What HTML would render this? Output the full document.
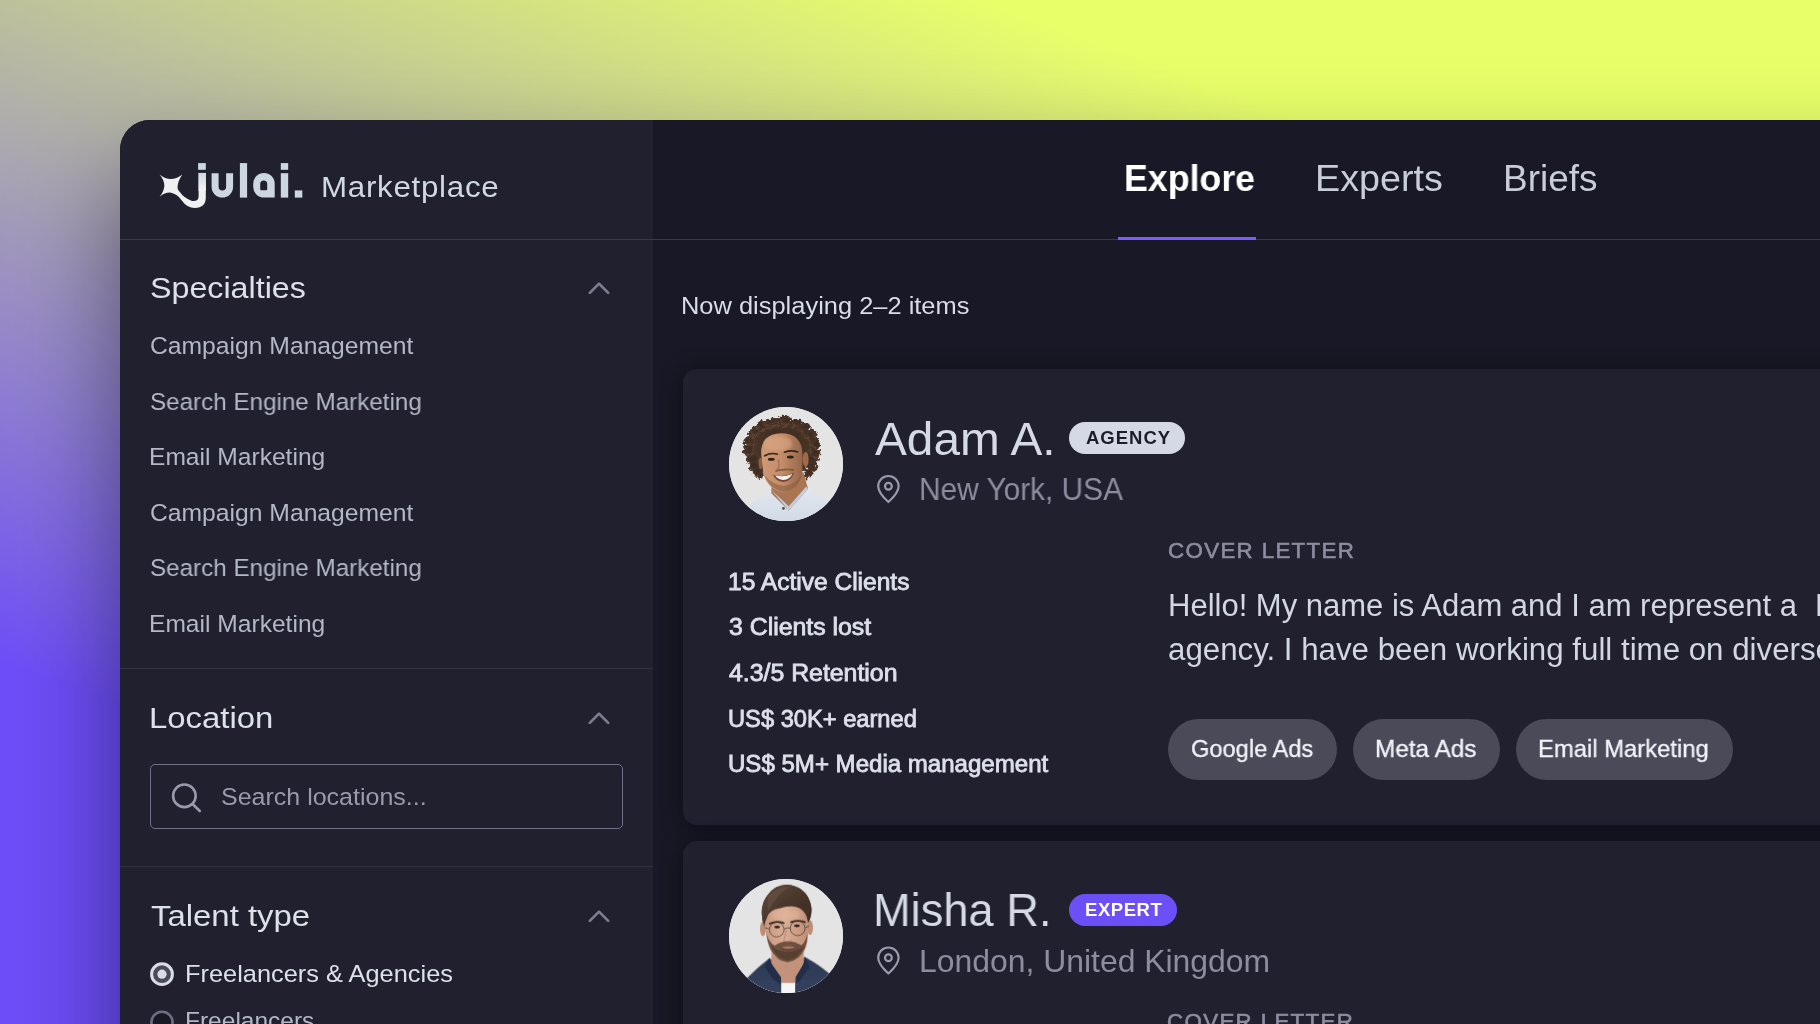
<!DOCTYPE html>
<html lang="en">
<head>
<meta charset="utf-8">
<title>julai. Marketplace</title>
<style>
*{box-sizing:border-box;margin:0;padding:0}
html,body{width:1820px;height:1024px;overflow:hidden}
body{font-family:"Liberation Sans",sans-serif;position:relative;
 background:linear-gradient(20deg,#6e4ef8 21.4%,#e8ff6a 81.9%);}
.abs{position:absolute}
.t{position:absolute;white-space:pre;line-height:1;transform-origin:0 0;will-change:transform}
#panel{position:absolute;left:120px;top:120px;width:1800px;height:1000px;border-radius:30px 0 0 0;
 background:#181826;box-shadow:0 55px 100px rgba(8,8,25,.5);overflow:hidden}
#side{position:absolute;left:0;top:0;width:533px;height:1000px;background:#21202f}
#hline{position:absolute;left:0;top:119px;width:1800px;height:1px;background:#393949}
.sdiv{position:absolute;left:0;width:533px;height:1px;background:#313142}
#uline{position:absolute;left:998px;top:117px;width:138px;height:3px;background:#7a5cff}
.card{position:absolute;left:563px;width:1300px;border-radius:14px;background:#21202f;box-shadow:0 2px 22px rgba(5,5,12,.45)}
.chip{position:absolute;top:599.2px;height:60.8px;border-radius:31px;background:#4b4a58}
.badge{position:absolute;height:32px;border-radius:16px}
#search{position:absolute;left:30.2px;top:644.4px;width:472.6px;height:65px;border:1.6px solid #70708a;border-radius:5px}
.av{position:absolute;width:114px;height:114px;border-radius:50%;overflow:hidden;background:#e4e4e4}
svg{position:absolute;overflow:visible}
</style>
</head>
<body>
<div id="panel">
  <div id="side"></div>
  <div id="hline"></div>
  <div id="uline"></div>
  <div class="sdiv" style="top:548px"></div>
  <div class="sdiv" style="top:746px"></div>
  <div id="search"></div>
  <div class="card" style="top:249.4px;height:456px"></div>
  <div class="card" style="top:720.8px;height:400px"></div>
  <div class="chip" style="left:1047.7px;width:169.3px"></div>
  <div class="chip" style="left:1232.6px;width:147.6px"></div>
  <div class="chip" style="left:1395.6px;width:217.2px"></div>
  <div class="badge" style="left:949px;top:302px;width:116px;background:#d5d9e5"></div>
  <div class="badge" style="left:949px;top:774px;width:108px;background:#6c4ff6"></div>
  <div class="av" style="left:609px;top:287px"><svg width="114" height="114" viewBox="68 55 900 900" style="left:0;top:0">
<defs>
<filter id="fz" x="-10%" y="-10%" width="120%" height="120%"><feTurbulence type="fractalNoise" baseFrequency="0.045" numOctaves="2" seed="4" result="n"/><feDisplacementMap in="SourceGraphic" in2="n" scale="46" xChannelSelector="R" yChannelSelector="G"/></filter>
<filter id="b1"><feGaussianBlur stdDeviation="5"/></filter>
<filter id="b2"><feGaussianBlur stdDeviation="14"/></filter>
<radialGradient id="h1" cx=".5" cy=".42" r=".62"><stop offset="0" stop-color="#3a2920"/><stop offset=".65" stop-color="#473226"/><stop offset="1" stop-color="#76553f"/></radialGradient>
<linearGradient id="s1" x1="0" y1="0" x2="1" y2="0"><stop offset="0" stop-color="#cf9a76"/><stop offset=".5" stop-color="#c48c68"/><stop offset="1" stop-color="#96664a"/></linearGradient>
<linearGradient id="sh1" x1="0" y1="0" x2="0" y2="1"><stop offset="0" stop-color="#e1e7f0"/><stop offset="1" stop-color="#cfd8e4"/></linearGradient>
</defs>
<rect x="0" y="0" width="1100" height="1100" fill="#e4e4e4"/>
<g filter="url(#b1)">
<g fill="url(#h1)" filter="url(#fz)"><ellipse cx="485" cy="368" rx="258" ry="196"/><circle cx="740" cy="354" r="30"/><circle cx="738" cy="376" r="31"/><circle cx="750" cy="410" r="35"/><circle cx="745" cy="431" r="44"/><circle cx="725" cy="458" r="27"/><circle cx="712" cy="474" r="27"/><circle cx="707" cy="472" r="34"/><circle cx="666" cy="499" r="37"/><circle cx="644" cy="528" r="34"/><circle cx="638" cy="530" r="33"/><circle cx="607" cy="543" r="36"/><circle cx="558" cy="539" r="30"/><circle cx="348" cy="538" r="43"/><circle cx="340" cy="526" r="44"/><circle cx="322" cy="517" r="28"/><circle cx="297" cy="498" r="30"/><circle cx="262" cy="484" r="28"/><circle cx="260" cy="471" r="34"/><circle cx="242" cy="450" r="34"/><circle cx="249" cy="430" r="44"/><circle cx="247" cy="416" r="30"/><circle cx="216" cy="401" r="40"/><circle cx="231" cy="363" r="31"/><circle cx="234" cy="350" r="37"/><circle cx="237" cy="335" r="29"/><circle cx="232" cy="323" r="42"/><circle cx="261" cy="274" r="27"/><circle cx="254" cy="268" r="37"/><circle cx="264" cy="254" r="27"/><circle cx="280" cy="242" r="36"/><circle cx="317" cy="218" r="35"/><circle cx="324" cy="204" r="39"/><circle cx="367" cy="185" r="28"/><circle cx="390" cy="193" r="40"/><circle cx="396" cy="179" r="31"/><circle cx="441" cy="172" r="38"/><circle cx="474" cy="167" r="36"/><circle cx="493" cy="185" r="34"/><circle cx="508" cy="160" r="42"/><circle cx="525" cy="163" r="36"/><circle cx="564" cy="188" r="31"/><circle cx="599" cy="175" r="30"/><circle cx="619" cy="185" r="31"/><circle cx="644" cy="216" r="31"/><circle cx="646" cy="218" r="39"/><circle cx="672" cy="225" r="39"/><circle cx="696" cy="266" r="43"/><circle cx="722" cy="268" r="40"/><circle cx="714" cy="282" r="33"/><circle cx="744" cy="320" r="30"/><circle cx="733" cy="323" r="33"/><circle cx="738" cy="344" r="30"/><circle cx="258" cy="470" r="50"/><circle cx="268" cy="525" r="44"/><circle cx="292" cy="568" r="38"/><circle cx="318" cy="598" r="26"/><circle cx="716" cy="470" r="52"/><circle cx="726" cy="528" r="42"/><circle cx="700" cy="575" r="36"/><circle cx="668" cy="604" r="24"/><circle cx="748" cy="420" r="40"/><circle cx="228" cy="395" r="40"/><circle cx="760" cy="350" r="34"/><circle cx="212" cy="330" r="30"/></g>
<path d="M100 980 Q180 820 405 728 L540 875 L692 692 Q830 770 920 870 L920 1000 L100 1000Z" fill="url(#sh1)"/>
<path d="M405 600 L655 570 L692 700 L540 872 L402 735Z" fill="#a97553"/>
<path d="M398 706 L412 722 L540 872 L692 700 L676 684 L540 838Z" fill="#c3cddb"/>
<ellipse cx="673" cy="468" rx="24" ry="58" fill="#9e6a4a"/>
<ellipse cx="318" cy="500" rx="16" ry="45" fill="#8f5f43"/>
<path d="M322 420 Q320 268 480 262 Q640 262 648 420 L648 560 Q625 716 500 726 Q385 716 340 590Z" fill="url(#s1)"/>
<ellipse cx="455" cy="345" rx="110" ry="60" fill="#dcaa88" opacity=".55" filter="url(#b2)"/>
<path d="M350 596 Q395 712 500 722 Q612 712 644 586 Q600 668 500 678 Q410 668 350 596Z" fill="#7d5640" opacity=".5"/>
<path d="M416 590 Q500 618 582 572 Q562 642 495 648 Q438 642 416 590Z" fill="#7f4236"/>
<path d="M432 596 Q500 612 568 583 Q548 627 496 631 Q452 627 432 596Z" fill="#f7f4ef"/>
<path d="M440 560 Q500 540 575 552" stroke="#6a432e" stroke-width="14" fill="none" stroke-linecap="round" opacity=".65"/>
<path d="M458 470 Q472 530 450 545 Q490 566 532 545" stroke="#93634a" stroke-width="10" fill="none" opacity=".75"/>
<ellipse cx="402" cy="468" rx="27" ry="12" fill="#2e2019"/><ellipse cx="552" cy="450" rx="27" ry="12" fill="#2e2019"/>
<path d="M350 440 Q400 412 450 428" stroke="#35251c" stroke-width="13" fill="none" stroke-linecap="round"/>
<path d="M506 412 Q560 392 610 410" stroke="#35251c" stroke-width="13" fill="none" stroke-linecap="round"/>
<circle cx="498" cy="856" r="11" fill="#4a4a52"/>
</g>
</svg></div>
  <div class="av" style="left:609px;top:759px"><svg width="114" height="114" viewBox="68 68 900 900" style="left:0;top:0">
<defs>
<filter id="c1"><feGaussianBlur stdDeviation="5"/></filter>
<filter id="c2"><feGaussianBlur stdDeviation="16"/></filter>
<linearGradient id="s2" x1="0" y1="0" x2="1" y2="0"><stop offset="0" stop-color="#c8987f"/><stop offset=".45" stop-color="#dbae95"/><stop offset="1" stop-color="#c08f76"/></linearGradient>
<linearGradient id="h2" x1="0" y1="0" x2="1" y2="1"><stop offset="0" stop-color="#5d4839"/><stop offset=".6" stop-color="#453428"/><stop offset="1" stop-color="#3a2c24"/></linearGradient>
<linearGradient id="sh2" x1="0" y1="0" x2="0" y2="1"><stop offset="0" stop-color="#2c3954"/><stop offset="1" stop-color="#34435f"/></linearGradient>
</defs>
<rect x="0" y="0" width="1100" height="1100" fill="#e4e4e4"/>
<g filter="url(#c1)">
<path d="M110 980 Q200 835 388 692 L470 770 L600 770 L666 682 Q810 760 910 860 L910 1000 L110 1000Z" fill="url(#sh2)"/>
<path d="M410 600 L652 600 L662 720 L596 900 L478 900 L398 730Z" fill="#c3927a"/>
<path d="M410 650 Q530 770 655 650 L655 600 L410 600Z" fill="#7f5d4e" opacity=".6"/>
<rect x="480" y="888" width="110" height="100" fill="#f5f5f5"/>
<path d="M388 692 L352 762 L418 862 L480 902 L478 842 L405 738Z" fill="#232f47"/>
<path d="M666 682 L704 760 L642 852 L592 902 L594 842 L656 738Z" fill="#232f47"/>
<path d="M346 445 Q296 290 372 196 Q440 100 560 116 Q694 146 718 290 Q724 362 692 414 L600 300 L420 300Z" fill="#453428"/>
<ellipse cx="336" cy="462" rx="23" ry="58" fill="#bf8d75"/><ellipse cx="708" cy="452" rx="23" ry="58" fill="#bf8d75"/>
<path d="M350 430 Q345 280 520 272 Q690 280 692 430 L688 560 Q660 712 528 722 Q400 712 372 560Z" fill="url(#s2)"/>
<ellipse cx="520" cy="350" rx="120" ry="50" fill="#e4b9a0" opacity=".5" filter="url(#c2)"/>
<path d="M360 490 Q370 560 392 612 Q440 718 530 724 Q625 714 668 612 Q686 560 690 490 Q670 575 640 590 Q590 562 535 558 Q470 562 430 594 Q385 575 360 490Z" fill="#54402f" opacity=".82"/>
<path d="M400 600 Q450 700 530 712 Q610 700 660 600 Q600 640 530 645 Q460 640 400 600Z" fill="#453224" opacity=".55"/>
<path d="M468 602 Q535 586 602 602 Q590 638 535 642 Q482 638 468 602Z" fill="#6a4a3c"/>
<path d="M480 607 Q535 592 594 607 Q535 628 480 607Z" fill="#b67868"/>
<path d="M346 445 Q296 290 372 196 Q440 100 560 116 Q694 146 718 290 Q724 362 692 414 Q694 332 642 296 Q560 268 470 298 Q392 310 372 362 Q352 402 346 445Z" fill="url(#h2)"/>
<path d="M380 200 Q450 120 560 130 Q500 150 450 210 Q410 260 380 320 Q360 260 380 200Z" fill="#6b5444" opacity=".6"/>
<g fill="none" stroke="#5a4c45" stroke-width="7"><circle cx="445" cy="467" r="58"/><circle cx="610" cy="457" r="58"/><path d="M503 462 Q527 448 552 456"/><path d="M387 462 L350 452"/><path d="M668 452 L700 440"/></g>
<ellipse cx="448" cy="447" rx="23" ry="11" fill="#2b231f"/><ellipse cx="604" cy="437" rx="23" ry="11" fill="#2b231f"/>
<path d="M390 420 Q445 396 500 416" stroke="#3b2d27" stroke-width="14" fill="none" stroke-linecap="round"/>
<path d="M558 408 Q612 388 667 408" stroke="#3b2d27" stroke-width="14" fill="none" stroke-linecap="round"/>
<path d="M520 470 Q508 540 498 552 Q530 573 566 552" stroke="#b3856f" stroke-width="9" fill="none" opacity=".8"/>
</g>
</svg></div>
</div>

<!-- icons (page coordinates) -->
<svg width="1820" height="1024" viewBox="0 0 1820 1024" style="left:0;top:0" fill="none">
  <!-- chevrons -->
  <g stroke="#7d7d90" stroke-width="2.7" stroke-linecap="round" stroke-linejoin="round">
    <path d="M589.8 292.9 L599 283.6 L608.2 292.9"/>
    <path d="M589.8 722.9 L599 713.6 L608.2 722.9"/>
    <path d="M589.8 920.9 L599 911.6 L608.2 920.9"/>
  </g>
  <!-- search icon -->
  <g stroke="#9a9aac" stroke-width="2.6" stroke-linecap="round">
    <circle cx="184.4" cy="795.8" r="11.3"/>
    <path d="M192.8 804.2 L199.8 811"/>
  </g>
  <!-- radios -->
  <circle cx="162" cy="974.2" r="10.4" stroke="#d9dde7" stroke-width="3" fill="#4a4a5a"/>
  <circle cx="162" cy="974.2" r="4.6" fill="#d9dde7"/>
  <circle cx="162" cy="1022.4" r="10.6" stroke="#6e6e82" stroke-width="2.6" fill="#191926"/>
  <!-- pins -->
  <g stroke="#9a9aac" stroke-width="2.2" stroke-linejoin="round">
    <path d="M888.4 502 C884 498 878.2 492.5 878.2 486.2 a10.2 10.2 0 0 1 20.4 0 C898.6 492.5 892.8 498 888.4 502Z"/>
    <circle cx="888.4" cy="486.3" r="3.4"/>
    <path d="M888.4 973.5 C884 969.5 878.2 964 878.2 957.7 a10.2 10.2 0 0 1 20.4 0 C898.6 964 892.8 969.5 888.4 973.5Z"/>
    <circle cx="888.4" cy="957.8" r="3.4"/>
  </g>
  <defs><linearGradient id="jg" x1="0" y1="172" x2="0" y2="200" gradientUnits="userSpaceOnUse"><stop offset="0" stop-color="#cdd7e1"/><stop offset=".6" stop-color="#f0f0f0"/></linearGradient></defs>
  <g fill="#cdd7e1" stroke="none">
    <rect x="198.1" y="163.1" width="7.7" height="6.7"/>
    <path d="M211.6 173.2h7v13.5a3.75 3.75 0 0 0 7.5 0v-13.5h7v13.6a10.75 10.75 0 0 1-21.5 0z"/>
    <rect x="239.9" y="163.1" width="7.2" height="34.5"/>
    <path fill-rule="evenodd" d="M274.7 197.6H264a10.8 10.8 0 0 1-10.8-10.8v-3.1a10.75 10.75 0 0 1 21.5 0zM260.2 189.2v-5.3a3.5 3.5 0 0 1 7 0v5.3a1 1 0 0 1-1 1h-5a1 1 0 0 1-1-1z"/>
    <rect x="280.8" y="163.1" width="7.4" height="6.7"/>
    <rect x="280.8" y="173.2" width="7.4" height="24.4"/>
    <rect x="294.8" y="190.4" width="7.5" height="7.2"/>
  </g>
  <path fill="#f0f0f0" stroke="none" d="M198.6 172.9H205.8V197.6Q205.8 207.9 194.8 207.9Q187 207.9 181.8 200.4Q177 193.6 170.1 192.5Q165 192.3 159.6 196.7Q169 185.5 159.6 174.5Q170.7 183.5 182.2 174.5Q174.2 187.7 179.9 192Q183.5 197.8 192 200.9Q198.6 201.5 198.6 196.7Z"/>
  <rect x="198.6" y="172.9" width="7.2" height="18" fill="url(#jg)" stroke="none"/>
</svg>
<div class="t" style="left:320.9px;top:173px;font-size:29px;font-weight:400;color:#d0d8e2;letter-spacing:0.646px;transform:scaleX(1.0807)">Marketplace</div>
<div class="t" style="left:1123.9px;top:161px;font-size:36.5px;font-weight:700;color:#ffffff;letter-spacing:0.000px;transform:scaleX(0.9789)">Explore</div>
<div class="t" style="left:1314.9px;top:161px;font-size:36.5px;font-weight:400;color:#c9cdd9;letter-spacing:0.000px;transform:scaleX(1.0327)">Experts</div>
<div class="t" style="left:1502.7px;top:161px;font-size:36.5px;font-weight:400;color:#c9cdd9;letter-spacing:0.000px;transform:scaleX(1.0129)">Briefs</div>
<div class="t" style="left:149.8px;top:273px;font-size:30.3px;font-weight:400;color:#dde1ea;letter-spacing:0.000px;transform:scaleX(1.0635)">Specialties</div>
<div class="t" style="left:149.7px;top:334px;font-size:24.5px;font-weight:400;color:#b3b7c6;letter-spacing:0.000px;transform:scaleX(1.0074)">Campaign Management</div>
<div class="t" style="left:149.7px;top:390px;font-size:24.5px;font-weight:400;color:#b3b7c6;letter-spacing:0.000px;transform:scaleX(0.9880)">Search Engine Marketing</div>
<div class="t" style="left:148.6px;top:445px;font-size:24.5px;font-weight:400;color:#b3b7c6;letter-spacing:0.000px;transform:scaleX(1.0034)">Email Marketing</div>
<div class="t" style="left:149.7px;top:501px;font-size:24.5px;font-weight:400;color:#b3b7c6;letter-spacing:0.000px;transform:scaleX(1.0074)">Campaign Management</div>
<div class="t" style="left:149.7px;top:556px;font-size:24.5px;font-weight:400;color:#b3b7c6;letter-spacing:0.000px;transform:scaleX(0.9880)">Search Engine Marketing</div>
<div class="t" style="left:148.6px;top:612px;font-size:24.5px;font-weight:400;color:#b3b7c6;letter-spacing:0.000px;transform:scaleX(1.0034)">Email Marketing</div>
<div class="t" style="left:149.0px;top:703px;font-size:30.3px;font-weight:400;color:#dde1ea;letter-spacing:0.000px;transform:scaleX(1.0859)">Location</div>
<div class="t" style="left:221.4px;top:785px;font-size:24.5px;font-weight:400;color:#9a9aac;letter-spacing:0.000px;transform:scaleX(1.0204)">Search locations...</div>
<div class="t" style="left:150.8px;top:901px;font-size:30.3px;font-weight:400;color:#dde1ea;letter-spacing:0.000px;transform:scaleX(1.0857)">Talent type</div>
<div class="t" style="left:184.8px;top:962px;font-size:24.5px;font-weight:400;color:#dde1ea;letter-spacing:0.000px;transform:scaleX(1.0355)">Freelancers &amp; Agencies</div>
<div class="t" style="left:184.8px;top:1009px;font-size:24.5px;font-weight:400;color:#b3b7c6;letter-spacing:0.000px;transform:scaleX(0.9968)">Freelancers</div>
<div class="t" style="left:681.2px;top:294px;font-size:24.7px;font-weight:400;color:#d9dde7;letter-spacing:0.000px;transform:scaleX(1.0303)">Now displaying 2–2 items</div>
<div class="t" style="left:874.7px;top:416px;font-size:46px;font-weight:400;color:#d6dae6;letter-spacing:0.000px;transform:scaleX(1.0383)">Adam A.</div>
<div class="t" style="left:1085.6px;top:429px;font-size:18.5px;font-weight:700;color:#1c1c2a;letter-spacing:0.998px">AGENCY</div>
<div class="t" style="left:918.7px;top:474px;font-size:30.5px;font-weight:400;color:#8d8da0;letter-spacing:0.000px;transform:scaleX(0.9783)">New York, USA</div>
<div class="t" style="left:728.1px;top:571px;font-size:23px;font-weight:400;color:#dde0ea;letter-spacing:0.000px;-webkit-text-stroke:0.8px #dde0ea;transform:scaleX(1.0672)">15 Active Clients</div>
<div class="t" style="left:728.9px;top:616px;font-size:23px;font-weight:400;color:#dde0ea;letter-spacing:0.000px;-webkit-text-stroke:0.8px #dde0ea;transform:scaleX(1.0796)">3 Clients lost</div>
<div class="t" style="left:729.0px;top:662px;font-size:23px;font-weight:400;color:#dde0ea;letter-spacing:0.000px;-webkit-text-stroke:0.8px #dde0ea;transform:scaleX(1.0798)">4.3/5 Retention</div>
<div class="t" style="left:728.4px;top:708px;font-size:23px;font-weight:400;color:#dde0ea;letter-spacing:0.000px;-webkit-text-stroke:0.8px #dde0ea;transform:scaleX(1.0292)">US$ 30K+ earned</div>
<div class="t" style="left:728.2px;top:753px;font-size:23px;font-weight:400;color:#dde0ea;letter-spacing:0.000px;-webkit-text-stroke:0.8px #dde0ea;transform:scaleX(1.0458)">US$ 5M+ Media management</div>
<div class="t" style="left:1168.2px;top:540px;font-size:22.3px;font-weight:400;color:#8d8da0;letter-spacing:1.357px;-webkit-text-stroke:0.6px #8d8da0">COVER LETTER</div>
<div class="t" style="left:1167.6px;top:590px;font-size:31px;font-weight:400;color:#d3d7e3;letter-spacing:0.000px">Hello! My name is Adam and I am represent a</div>
<div class="t" style="left:1815.0px;top:590px;font-size:31px;font-weight:400;color:#d3d7e3;letter-spacing:0.000px">PPC</div>
<div class="t" style="left:1167.6px;top:634px;font-size:31px;font-weight:400;color:#d3d7e3;letter-spacing:0.000px;transform:scaleX(1.0084)">agency. I have been working full time on diverse projects</div>
<div class="t" style="left:1190.6px;top:737px;font-size:24.8px;font-weight:400;color:#f1f3f9;letter-spacing:0.000px;-webkit-text-stroke:0.35px #f1f3f9;transform:scaleX(0.9537)">Google Ads</div>
<div class="t" style="left:1374.7px;top:737px;font-size:24.8px;font-weight:400;color:#f1f3f9;letter-spacing:0.000px;-webkit-text-stroke:0.35px #f1f3f9;transform:scaleX(0.9810)">Meta Ads</div>
<div class="t" style="left:1538.1px;top:737px;font-size:24.8px;font-weight:400;color:#f1f3f9;letter-spacing:0.000px;-webkit-text-stroke:0.35px #f1f3f9;transform:scaleX(0.9602)">Email Marketing</div>
<div class="t" style="left:872.8px;top:887px;font-size:46px;font-weight:400;color:#d6dae6;letter-spacing:0.000px;transform:scaleX(0.9834)">Misha R.</div>
<div class="t" style="left:1085.0px;top:901px;font-size:18.5px;font-weight:700;color:#ffffff;letter-spacing:0.536px">EXPERT</div>
<div class="t" style="left:918.7px;top:946px;font-size:30.5px;font-weight:400;color:#8d8da0;letter-spacing:0.000px;transform:scaleX(1.0459)">London, United Kingdom</div>
<div class="t" style="left:1167.4px;top:1011px;font-size:22.3px;font-weight:400;color:#8d8da0;letter-spacing:1.357px;-webkit-text-stroke:0.6px #8d8da0">COVER LETTER</div>
</body>
</html>
